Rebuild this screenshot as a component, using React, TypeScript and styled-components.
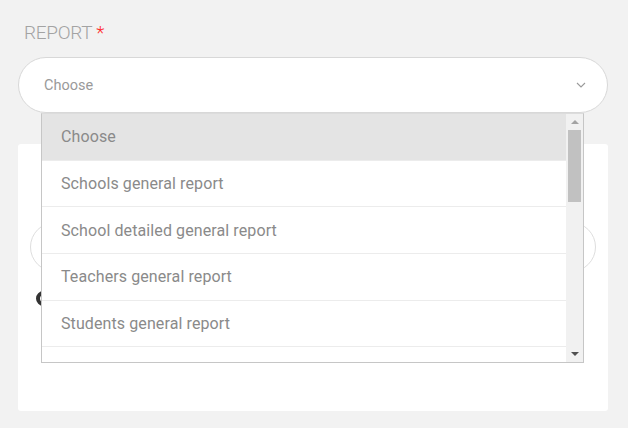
import React from 'react';
import styled, { createGlobalStyle } from 'styled-components';

const GlobalStyle = createGlobalStyle`
  body {
    margin: 0;
    background: #f2f2f2;
    font-family: Roboto, "Liberation Sans", sans-serif;
  }
`;

const Page = styled.div`
  width: 628px;
  height: 428px;
  padding: 21px 20px 0 18px;
  box-sizing: border-box;
  overflow: hidden;
`;

const Field = styled.div`
  position: relative;
`;

const Label = styled.div`
  padding-left: 6px;
  font-size: 19px;
  font-weight: 300;
  color: #a3a3a3;
  line-height: 23px;
  letter-spacing: -0.3px;
`;

const Required = styled.span`
  color: #ff2a2a;
  margin-left: 4px;
`;

const SelectBox = styled.div`
  margin-top: 13px;
  height: 56px;
  box-sizing: border-box;
  border: 1px solid #d8d8d8;
  border-radius: 28px;
  background: #fff;
  display: flex;
  align-items: center;
  justify-content: space-between;
  padding: 0 21px 0 25px;
  font-size: 14.5px;
  color: #9a9a9a;
`;

const Card = styled.div`
  margin-top: 31px;
  height: 267px;
  background: #fff;
  border-radius: 3px;
  padding: 78px 12px 0 12px;
  box-sizing: border-box;
`;

const InnerInput = styled.div`
  height: 50px;
  border: 1px solid #dedede;
  border-radius: 25px;
  box-sizing: border-box;
`;

const Radio = styled.div`
  margin: 19px 0 0 6px;
  width: 15px;
  height: 15px;
  border-radius: 50%;
  border: 4px solid #333;
  box-sizing: border-box;
  background: #fff;
`;

const Dropdown = styled.div`
  position: absolute;
  top: 92px;
  left: 23px;
  width: 543px;
  height: 250px;
  box-sizing: border-box;
  border: 1px solid #c6c6c6;
  border-top-color: #dcdcdc;
  background: #fff;
  display: flex;
  overflow: hidden;
`;

const List = styled.div`
  flex: 1;
`;

const Option = styled.div<{ $active?: boolean }>`
  height: 45.7px;
  border-bottom: 1px solid #ececec;
  background: ${p => (p.$active ? '#e4e4e4' : '#fff')};
  display: flex;
  align-items: center;
  padding-left: 19px;
  font-size: 16px;
  letter-spacing: 0.1px;
  color: #8a8a8a;
`;

const Scrollbar = styled.div`
  width: 17px;
  background: #f1f1f1;
  display: flex;
  flex-direction: column;
  align-items: center;
`;

const Arrow = styled.div<{ $down?: boolean; $color: string }>`
  height: 16px;
  display: flex;
  align-items: center;
  justify-content: center;
  margin-top: ${p => (p.$down ? 'auto' : '0')};
  &::before {
    content: '';
    border-left: 4px solid transparent;
    border-right: 4px solid transparent;
    ${p => (p.$down ? 'border-top' : 'border-bottom')}: 4px solid ${p => p.$color};
  }
`;

const Thumb = styled.div`
  width: 13px;
  height: 72px;
  background: #c1c1c1;
`;

const options = [
  'Choose',
  'Schools general report',
  'School detailed general report',
  'Teachers general report',
  'Students general report',
];

export default function App() {
  return (
    <>
      <GlobalStyle />
      <Page>
        <Field>
          <Label>
            REPORT<Required>*</Required>
          </Label>
          <SelectBox>
            <span>Choose</span>
            <svg width="10" height="6" viewBox="0 0 10 6" fill="none">
              <path d="M1 1l4 4 4-4" stroke="#9a9a9a" strokeWidth="1.1" />
            </svg>
          </SelectBox>
          <Card>
            <InnerInput />
            <Radio />
          </Card>
          <Dropdown>
            <List>
              {options.map((o, i) => (
                <Option key={o} $active={i === 0}>
                  {o}
                </Option>
              ))}
            </List>
            <Scrollbar>
              <Arrow $color="#a3a3a3" />
              <Thumb />
              <Arrow $down $color="#505050" />
            </Scrollbar>
          </Dropdown>
        </Field>
      </Page>
    </>
  );
}
